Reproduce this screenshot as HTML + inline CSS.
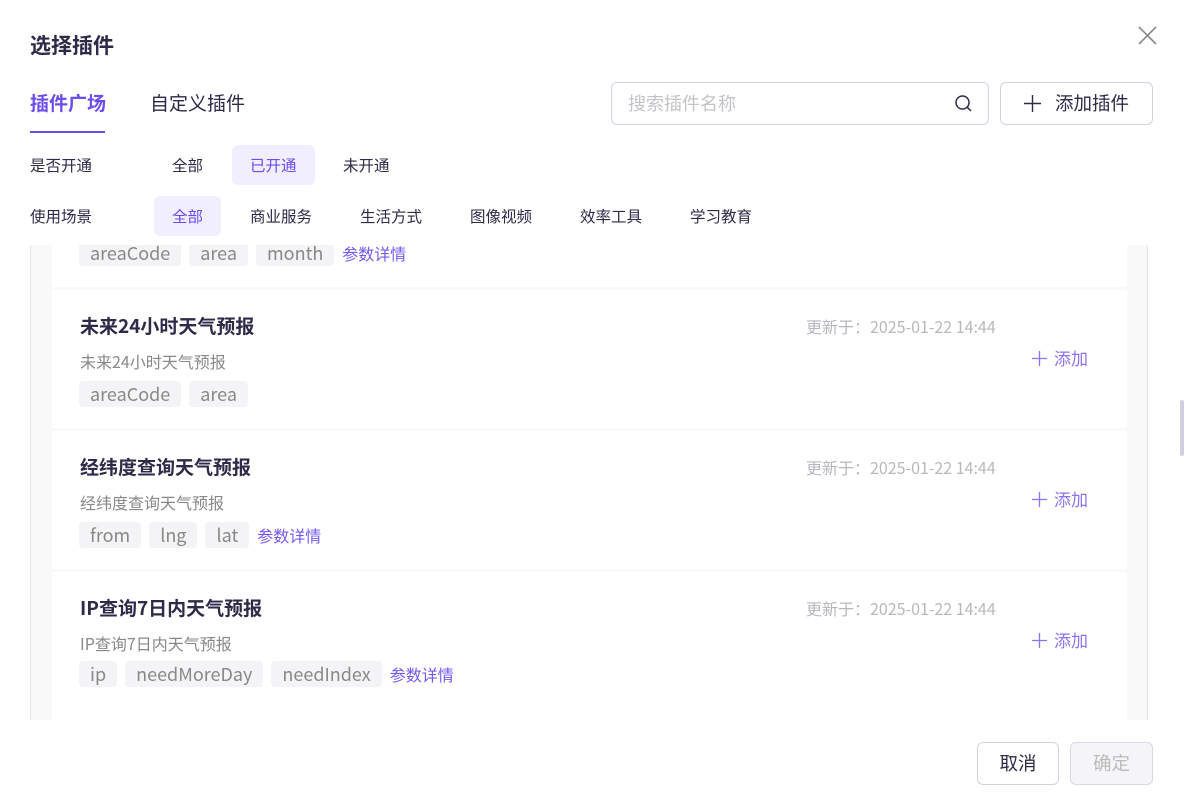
<!DOCTYPE html>
<html><head><meta charset="utf-8"><style>
*{margin:0;padding:0;box-sizing:border-box}
body{width:1184px;height:800px;position:relative;overflow:hidden;background:#fff;font-family:"Noto Sans CJK SC","Liberation Sans",sans-serif;color:#2e2a48}
.a{position:absolute;white-space:nowrap}
.gray{position:absolute;left:30px;top:245px;width:1118px;height:475px;background:#f9f9fa;border-left:1px solid #e6e6ea;border-right:1px solid #e6e6ea}
.card{position:absolute;left:52px;width:1075px;background:#fff}
.tags{position:absolute;left:27px;display:flex;gap:8px;align-items:center;white-space:nowrap}
.tag{height:26px;line-height:26px;padding:0 11px;background:#f4f4f6;border-radius:4px;color:#888;font-size:18px}
.link{color:#7358f0;font-size:16px}
.t{position:absolute;left:28px;font-size:19px;font-weight:bold;color:#2e2a48;line-height:26px}
.d{position:absolute;left:28px;font-size:16px;color:#888;line-height:20px}
.u{position:absolute;left:754px;font-size:16px;color:#b8b8bc;line-height:20px}
.add{position:absolute;left:980px;font-size:17px;color:#8a74f4;line-height:22px}
.add svg{vertical-align:-1px;margin-right:7px}
.f{font-size:15.5px;color:#2e2a48;line-height:20px}
</style></head><body>
<div class="gray"></div>
<div class="card" style="top:200px;height:87px">
  <div class="tags" style="top:40px"><span class="tag">areaCode</span><span class="tag">area</span><span class="tag">month</span><span class="link">参数详情</span></div>
</div>
<div class="card" style="top:290px;height:138px">
  <div class="t" style="top:23px">未来24小时天气预报</div>
  <div class="u" style="top:26px">更新于：2025-01-22 14:44</div>
  <div class="d" style="top:61px">未来24小时天气预报</div>
  <div class="add" style="top:57px"><svg width="15" height="15" viewBox="0 0 15 15"><path d="M7.5 0V15M0 7.5H15" stroke="#8a74f4" stroke-width="1.3"/></svg>添加</div>
  <div class="tags" style="top:91px"><span class="tag">areaCode</span><span class="tag">area</span></div>
</div>
<div class="card" style="top:431px;height:138px">
  <div class="t" style="top:23px">经纬度查询天气预报</div>
  <div class="u" style="top:26px">更新于：2025-01-22 14:44</div>
  <div class="d" style="top:61px">经纬度查询天气预报</div>
  <div class="add" style="top:57px"><svg width="15" height="15" viewBox="0 0 15 15"><path d="M7.5 0V15M0 7.5H15" stroke="#8a74f4" stroke-width="1.3"/></svg>添加</div>
  <div class="tags" style="top:91px"><span class="tag">from</span><span class="tag">lng</span><span class="tag">lat</span><span class="link">参数详情</span></div>
</div>
<div class="card" style="top:572px;height:148px">
  <div class="t" style="top:23px">IP查询7日内天气预报</div>
  <div class="u" style="top:26px">更新于：2025-01-22 14:44</div>
  <div class="d" style="top:61px">IP查询7日内天气预报</div>
  <div class="add" style="top:57px"><svg width="15" height="15" viewBox="0 0 15 15"><path d="M7.5 0V15M0 7.5H15" stroke="#8a74f4" stroke-width="1.3"/></svg>添加</div>
  <div class="tags" style="top:89px"><span class="tag">ip</span><span class="tag">needMoreDay</span><span class="tag">needIndex</span><span class="link">参数详情</span></div>
</div>
<div style="position:absolute;left:1180px;top:400px;width:4px;height:56px;background:#d0d0dc;border-radius:2px"></div>

<div style="position:absolute;left:0;top:0;width:1184px;height:245px;background:#fff"></div>
<div class="a" style="left:30px;top:31px;font-size:21px;font-weight:bold;line-height:28px">选择插件</div>
<svg class="a" style="left:1138px;top:26px" width="19" height="19" viewBox="0 0 19 19"><path d="M1 1L18 18M18 1L1 18" stroke="#888" stroke-width="1.6"/></svg>
<div class="a" style="left:30px;top:90px;font-size:19px;font-weight:bold;color:#6a4cf0;line-height:26px">插件广场</div>
<div style="position:absolute;left:30px;top:131px;width:75px;height:2px;background:#6a4cf0"></div>
<div class="a" style="left:150px;top:90px;font-size:19px;color:#2e2a48;line-height:26px">自定义插件</div>
<div style="position:absolute;left:611px;top:82px;width:378px;height:43px;border:1px solid #d3d2e2;border-radius:6px"></div>
<div class="a" style="left:628px;top:91px;font-size:18px;color:#c4c4c8;line-height:24px">搜索插件名称</div>
<svg class="a" style="left:954px;top:94px" width="19" height="19" viewBox="0 0 19 19"><circle cx="8.5" cy="8.5" r="6.5" fill="none" stroke="#2e2a48" stroke-width="1.5"/><path d="M13.2 13.2L17 17" stroke="#2e2a48" stroke-width="1.5"/></svg>
<div style="position:absolute;left:1000px;top:82px;width:153px;height:43px;border:1px solid #d3d2e2;border-radius:6px"></div>
<svg class="a" style="left:1024px;top:95px" width="17" height="17" viewBox="0 0 17 17"><path d="M8.5 0V17M0 8.5H17" stroke="#2e2a48" stroke-width="1.4"/></svg>
<div class="a" style="left:1055px;top:90px;font-size:18.5px;color:#2e2a48;line-height:26px">添加插件</div>

<div class="a f" style="left:30px;top:155px">是否开通</div>
<div class="a f" style="left:172px;top:155px">全部</div>
<div style="position:absolute;left:232px;top:145px;width:83px;height:40px;background:#f1efff;border-radius:6px"></div>
<div class="a f" style="left:250px;top:155px;color:#6a4cf0">已开通</div>
<div class="a f" style="left:343px;top:155px">未开通</div>

<div class="a f" style="left:30px;top:206px">使用场景</div>
<div style="position:absolute;left:154px;top:196px;width:67px;height:40px;background:#f1efff;border-radius:6px"></div>
<div class="a f" style="left:172px;top:206px;color:#6a4cf0">全部</div>
<div class="a f" style="left:250px;top:206px">商业服务</div>
<div class="a f" style="left:360px;top:206px">生活方式</div>
<div class="a f" style="left:470px;top:206px">图像视频</div>
<div class="a f" style="left:580px;top:206px">效率工具</div>
<div class="a f" style="left:690px;top:206px">学习教育</div>

<div style="position:absolute;left:977px;top:742px;width:82px;height:43px;border:1px solid #d3d2e2;border-radius:6px;text-align:center;line-height:41px;font-size:18.5px;color:#2e2a48">取消</div>
<div style="position:absolute;left:1070px;top:742px;width:83px;height:43px;border:1px solid #d8d8e2;border-radius:6px;background:#f5f5f8;text-align:center;line-height:41px;font-size:18.5px;color:#bbb">确定</div>
</body></html>
